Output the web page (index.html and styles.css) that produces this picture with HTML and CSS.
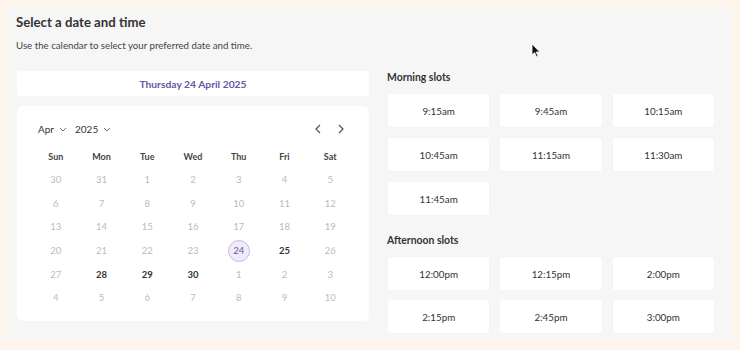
FILE: index.html
```html
<!DOCTYPE html>
<html lang="en">
<head>
<meta charset="utf-8">
<title>Select a date and time</title>
<link rel="stylesheet" href="styles.css">
</head>
<body>
<div class="panel">
  <h1 class="title">Select a date and time</h1>
  <p class="subtitle">Use the calendar to select your preferred date and time.</p>
  <div class="main">
    <div class="left">
      <div class="datebox">Thursday 24 April 2025</div>
      <div class="card">
        <div class="calhead">
          <div class="selects">
            <span class="sel">Apr <svg class="chev" width="8" height="5" viewBox="0 0 8 5"><path d="M1 1l3 3 3-3" fill="none" stroke="#777" stroke-width="1"/></svg></span>
            <span class="sel">2025 <svg class="chev" width="8" height="5" viewBox="0 0 8 5"><path d="M1 1l3 3 3-3" fill="none" stroke="#777" stroke-width="1"/></svg></span>
          </div>
          <div class="nav">
            <svg width="6" height="10" viewBox="0 0 6 10"><path d="M5 1L1 5l4 4" fill="none" stroke="#555" stroke-width="1.2"/></svg>
            <svg width="6" height="10" viewBox="0 0 6 10"><path d="M1 1l4 4-4 4" fill="none" stroke="#555" stroke-width="1.2"/></svg>
          </div>
        </div>
        <div class="grid">
          <div class="dh">Sun</div><div class="dh">Mon</div><div class="dh">Tue</div><div class="dh">Wed</div><div class="dh">Thu</div><div class="dh">Fri</div><div class="dh">Sat</div>
          <div class="d">30</div><div class="d">31</div><div class="d">1</div><div class="d">2</div><div class="d">3</div><div class="d">4</div><div class="d">5</div>
          <div class="d">6</div><div class="d">7</div><div class="d">8</div><div class="d">9</div><div class="d">10</div><div class="d">11</div><div class="d">12</div>
          <div class="d">13</div><div class="d">14</div><div class="d">15</div><div class="d">16</div><div class="d">17</div><div class="d">18</div><div class="d">19</div>
          <div class="d">20</div><div class="d">21</div><div class="d">22</div><div class="d">23</div><div class="d"><span class="selected">24</span></div><div class="d on">25</div><div class="d">26</div>
          <div class="d">27</div><div class="d on">28</div><div class="d on">29</div><div class="d on">30</div><div class="d">1</div><div class="d">2</div><div class="d">3</div>
          <div class="d">4</div><div class="d">5</div><div class="d">6</div><div class="d">7</div><div class="d">8</div><div class="d">9</div><div class="d">10</div>
        </div>
      </div>
    </div>
    <div class="right">
      <h2 class="label">Morning slots</h2>
      <div class="slots">
        <button class="slot">9:15am</button>
        <button class="slot">9:45am</button>
        <button class="slot">10:15am</button>
        <button class="slot">10:45am</button>
        <button class="slot">11:15am</button>
        <button class="slot">11:30am</button>
        <button class="slot">11:45am</button>
      </div>
      <h2 class="label afternoon">Afternoon slots</h2>
      <div class="slots pm">
        <button class="slot">12:00pm</button>
        <button class="slot">12:15pm</button>
        <button class="slot">2:00pm</button>
        <button class="slot">2:15pm</button>
        <button class="slot">2:45pm</button>
        <button class="slot">3:00pm</button>
      </div>
    </div>
  </div>
  <svg class="cursor" width="10" height="15" viewBox="0 0 10 15"><path d="M1 1v11l2.6-2.4 1.8 4.2 1.6-.7-1.8-4.1H8.8z" fill="#111" stroke="#fff" stroke-width="0.8"/></svg>
</div>
</body>
</html>
```
FILE: styles.css
```css
* { box-sizing: border-box; }
html, body { margin: 0; padding: 0; }
body {
  background: #fdf5ec;
  font-family: Lato, "Open Sans", "Liberation Sans", sans-serif;
  color: #333;
  width: 740px;
  height: 350px;
  overflow: hidden;
}
.panel {
  position: relative;
  margin: 8px 0 0 8px;
  width: 724px;
  height: 332px;
  background: #f6f6f6;
  padding: 6px 8px 0 8px;
}
.title {
  margin: 0;
  font-size: 13.2px;
  line-height: 16px;
  font-weight: 700;
  color: #333;
}
.subtitle {
  margin: 8px 0 0 0;
  font-size: 9.7px;
  line-height: 14px;
  color: #444;
}
.main {
  display: flex;
  gap: 19px;
  margin-top: 18px;
  padding-left: 1px;
}
.left {
  width: 352px;
  display: flex;
  flex-direction: column;
  gap: 10px;
}
.datebox {
  height: 25px;
  background: #fff;
  border-radius: 3px;
  display: flex;
  align-items: center;
  justify-content: center;
  color: #6a54a3;
  font-size: 10.3px;
  font-weight: 700;
  margin-top: 1px;
}
.card {
  height: 215px;
  background: #fff;
  border-radius: 6px;
  padding: 16px 16px 0 16px;
}
.calhead {
  height: 14px;
  display: flex;
  justify-content: space-between;
  align-items: center;
  padding-left: 5px;
  padding-right: 9px;
}
.selects { display: flex; gap: 8px; align-items: center; }
.sel {
  font-size: 10px;
  color: #333;
  display: inline-flex;
  align-items: center;
  gap: 5px;
}
.nav { display: flex; gap: 17px; align-items: center; }
.grid {
  margin-top: 8px;
  display: grid;
  grid-template-columns: repeat(7, 1fr);
  grid-template-rows: 24px;
  grid-auto-rows: 23.6px;
}
.dh {
  display: flex;
  align-items: center;
  justify-content: center;
  font-size: 9px;
  font-weight: 700;
  color: #444;
}
.d {
  display: flex;
  align-items: center;
  justify-content: center;
  font-size: 9.5px;
  color: #bbb;
}
.d.on { color: #333; font-weight: 700; }
.selected {
  width: 22px;
  height: 22px;
  border-radius: 50%;
  background: #efebf8;
  border: 1px solid #c7bedf;
  color: #6a54a3;
  display: flex;
  align-items: center;
  justify-content: center;
  font-size: 9.5px;
}
.right {
  width: 326px;
}
.label {
  margin: 0;
  font-size: 10.4px;
  line-height: 14px;
  font-weight: 700;
  color: #333;
  margin-left: -1px;
}
.slots {
  margin-top: 10px;
  display: grid;
  grid-template-columns: repeat(3, 1fr);
  grid-auto-rows: 33px;
  gap: 11px;
}
.slots.pm { row-gap: 10px; }
.afternoon { margin-top: 18px; }
.slot {
  background: #fff;
  border: none;
  border-radius: 3px;
  box-shadow: 0 0 2px rgba(0,0,0,0.04);
  font-family: Lato, "Open Sans", "Liberation Sans", sans-serif;
  font-size: 9.8px;
  color: #333;
  padding: 0;
}
.cursor {
  position: absolute;
  left: 523px;
  top: 35px;
}
```
